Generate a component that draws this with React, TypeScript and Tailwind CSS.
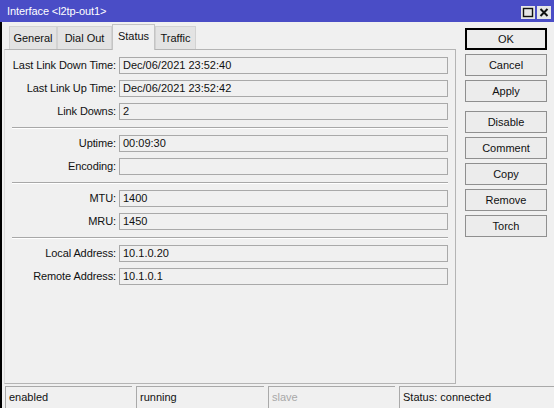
import React from "react";

const font = { fontFamily: '"Liberation Sans", Arial, sans-serif' };

type Row = { label: string; value: string } | "sep";

const rows: Row[] = [
  { label: "Last Link Down Time:", value: "Dec/06/2021 23:52:40" },
  { label: "Last Link Up Time:", value: "Dec/06/2021 23:52:42" },
  { label: "Link Downs:", value: "2" },
  "sep",
  { label: "Uptime:", value: "00:09:30" },
  { label: "Encoding:", value: "" },
  "sep",
  { label: "MTU:", value: "1400" },
  { label: "MRU:", value: "1450" },
  "sep",
  { label: "Local Address:", value: "10.1.0.20" },
  { label: "Remote Address:", value: "10.1.0.1" },
];

const tabs = [
  { name: "General", w: "w-[48px]" },
  { name: "Dial Out", w: "w-[55px]" },
  { name: "Status", w: "w-[43px]" },
  { name: "Traffic", w: "w-[41px]" },
];

function Btn({ label, primary, extra }: { label: string; primary?: boolean; extra?: string }) {
  return (
    <div
      className={
        "h-[22px] w-[82px] flex items-center justify-center bg-[#ececec] text-[11px] text-[#111] " +
        (primary ? "border-2 border-black" : "border border-[#8f8f8f]") +
        (extra ? " " + extra : "")
      }
    >
      {label}
    </div>
  );
}

export default function App() {
  return (
    <div className="w-[554px] h-[408px] bg-[#f0f0f0] flex flex-col overflow-hidden" style={font}>
      {/* title bar */}
      <div className="h-[22px] bg-[#4a4dc6] flex items-center justify-between pl-[7px] pr-[3px]">
        <span className="text-white text-[11px] leading-none tracking-[-0.1px]">Interface &lt;l2tp-out1&gt;</span>
        <div className="flex gap-[2px] mt-[2px]">
          <svg width="14" height="13" viewBox="0 0 14 13">
            <rect x="0" y="0" width="14" height="13" fill="#e6e6e6" />
            <rect x="2.5" y="2.5" width="9" height="8" fill="none" stroke="#111" strokeWidth="1.4" />
          </svg>
          <svg width="14" height="13" viewBox="0 0 14 13">
            <rect x="0" y="0" width="14" height="13" fill="#e6e6e6" />
            <path d="M3.5 3 L10.5 10 M10.5 3 L3.5 10" stroke="#111" strokeWidth="2" />
          </svg>
        </div>
      </div>

      {/* body */}
      <div className="flex-1 flex border-l-2 border-black">
        <div className="flex flex-col pl-[2px] pb-[2px]">
          {/* tabs */}
          <div className="flex items-end h-[27px] pl-[5px]">
            {tabs.map((t) =>
              t.name === "Status" ? (
                <div
                  key={t.name}
                  className={
                    t.w +
                    " h-[26px] -mb-px relative z-10 bg-[#f0f0f0] border border-b-0 border-[#c4c4c4] flex items-center justify-center text-[11px] text-[#111] pb-[3px]"
                  }
                >
                  {t.name}
                </div>
              ) : (
                <div
                  key={t.name}
                  className={
                    t.w +
                    " h-[23px] bg-[#e3e3e3] border border-b-0 border-[#d2d2d2] flex items-center justify-center text-[11px] text-[#111]"
                  }
                >
                  {t.name}
                </div>
              )
            )}
          </div>
          {/* panel */}
          <div className="w-[452px] flex-1 border border-[#b4b4b4] border-l-[#dcdcdc] pt-[7px] flex flex-col gap-[6px]">
            {rows.map((r, i) =>
              r === "sep" ? (
                <div key={i} className="h-[3px] flex flex-col justify-end ml-[7px] w-[436px]">
                  <div className="h-px bg-[#a8a8a8]" />
                  <div className="h-px bg-white" />
                </div>
              ) : (
                <div key={i} className="flex items-center h-[17px]">
                  <div className="w-[111px] text-right text-[11px] text-[#111] tracking-[-0.1px] whitespace-nowrap">
                    {r.label}
                  </div>
                  <div className="ml-[3px] w-[329px] h-[17px] border border-[#a9a9a9] bg-[#f0f0f0] px-[3px] text-[11px] leading-[15px] text-[#111]">
                    {r.value}
                  </div>
                </div>
              )
            )}
          </div>
        </div>

        {/* action buttons */}
        <div className="pl-[9px] pt-[6px] flex flex-col gap-[4px]">
          <Btn label="OK" primary />
          <Btn label="Cancel" />
          <Btn label="Apply" />
          <Btn label="Disable" extra="mt-[5px]" />
          <Btn label="Comment" />
          <Btn label="Copy" />
          <Btn label="Remove" />
          <Btn label="Torch" />
        </div>
      </div>

      {/* status bar */}
      <div className="h-[22px] flex gap-[4px] border-l-2 border-black pl-[3px] text-[11px]">
        <div className="w-[127px] border-t border-l border-[#a9a9a9] pl-[3px] flex items-center text-[#111]">enabled</div>
        <div className="w-[128px] border-t border-l border-[#a9a9a9] pl-[3px] flex items-center text-[#111]">running</div>
        <div className="w-[127px] border-t border-l border-[#a9a9a9] pl-[3px] flex items-center text-[#a8a8a8]">slave</div>
        <div className="flex-1 border-t border-l border-[#a9a9a9] pl-[3px] flex items-center text-[#111]">Status: connected</div>
      </div>
    </div>
  );
}
